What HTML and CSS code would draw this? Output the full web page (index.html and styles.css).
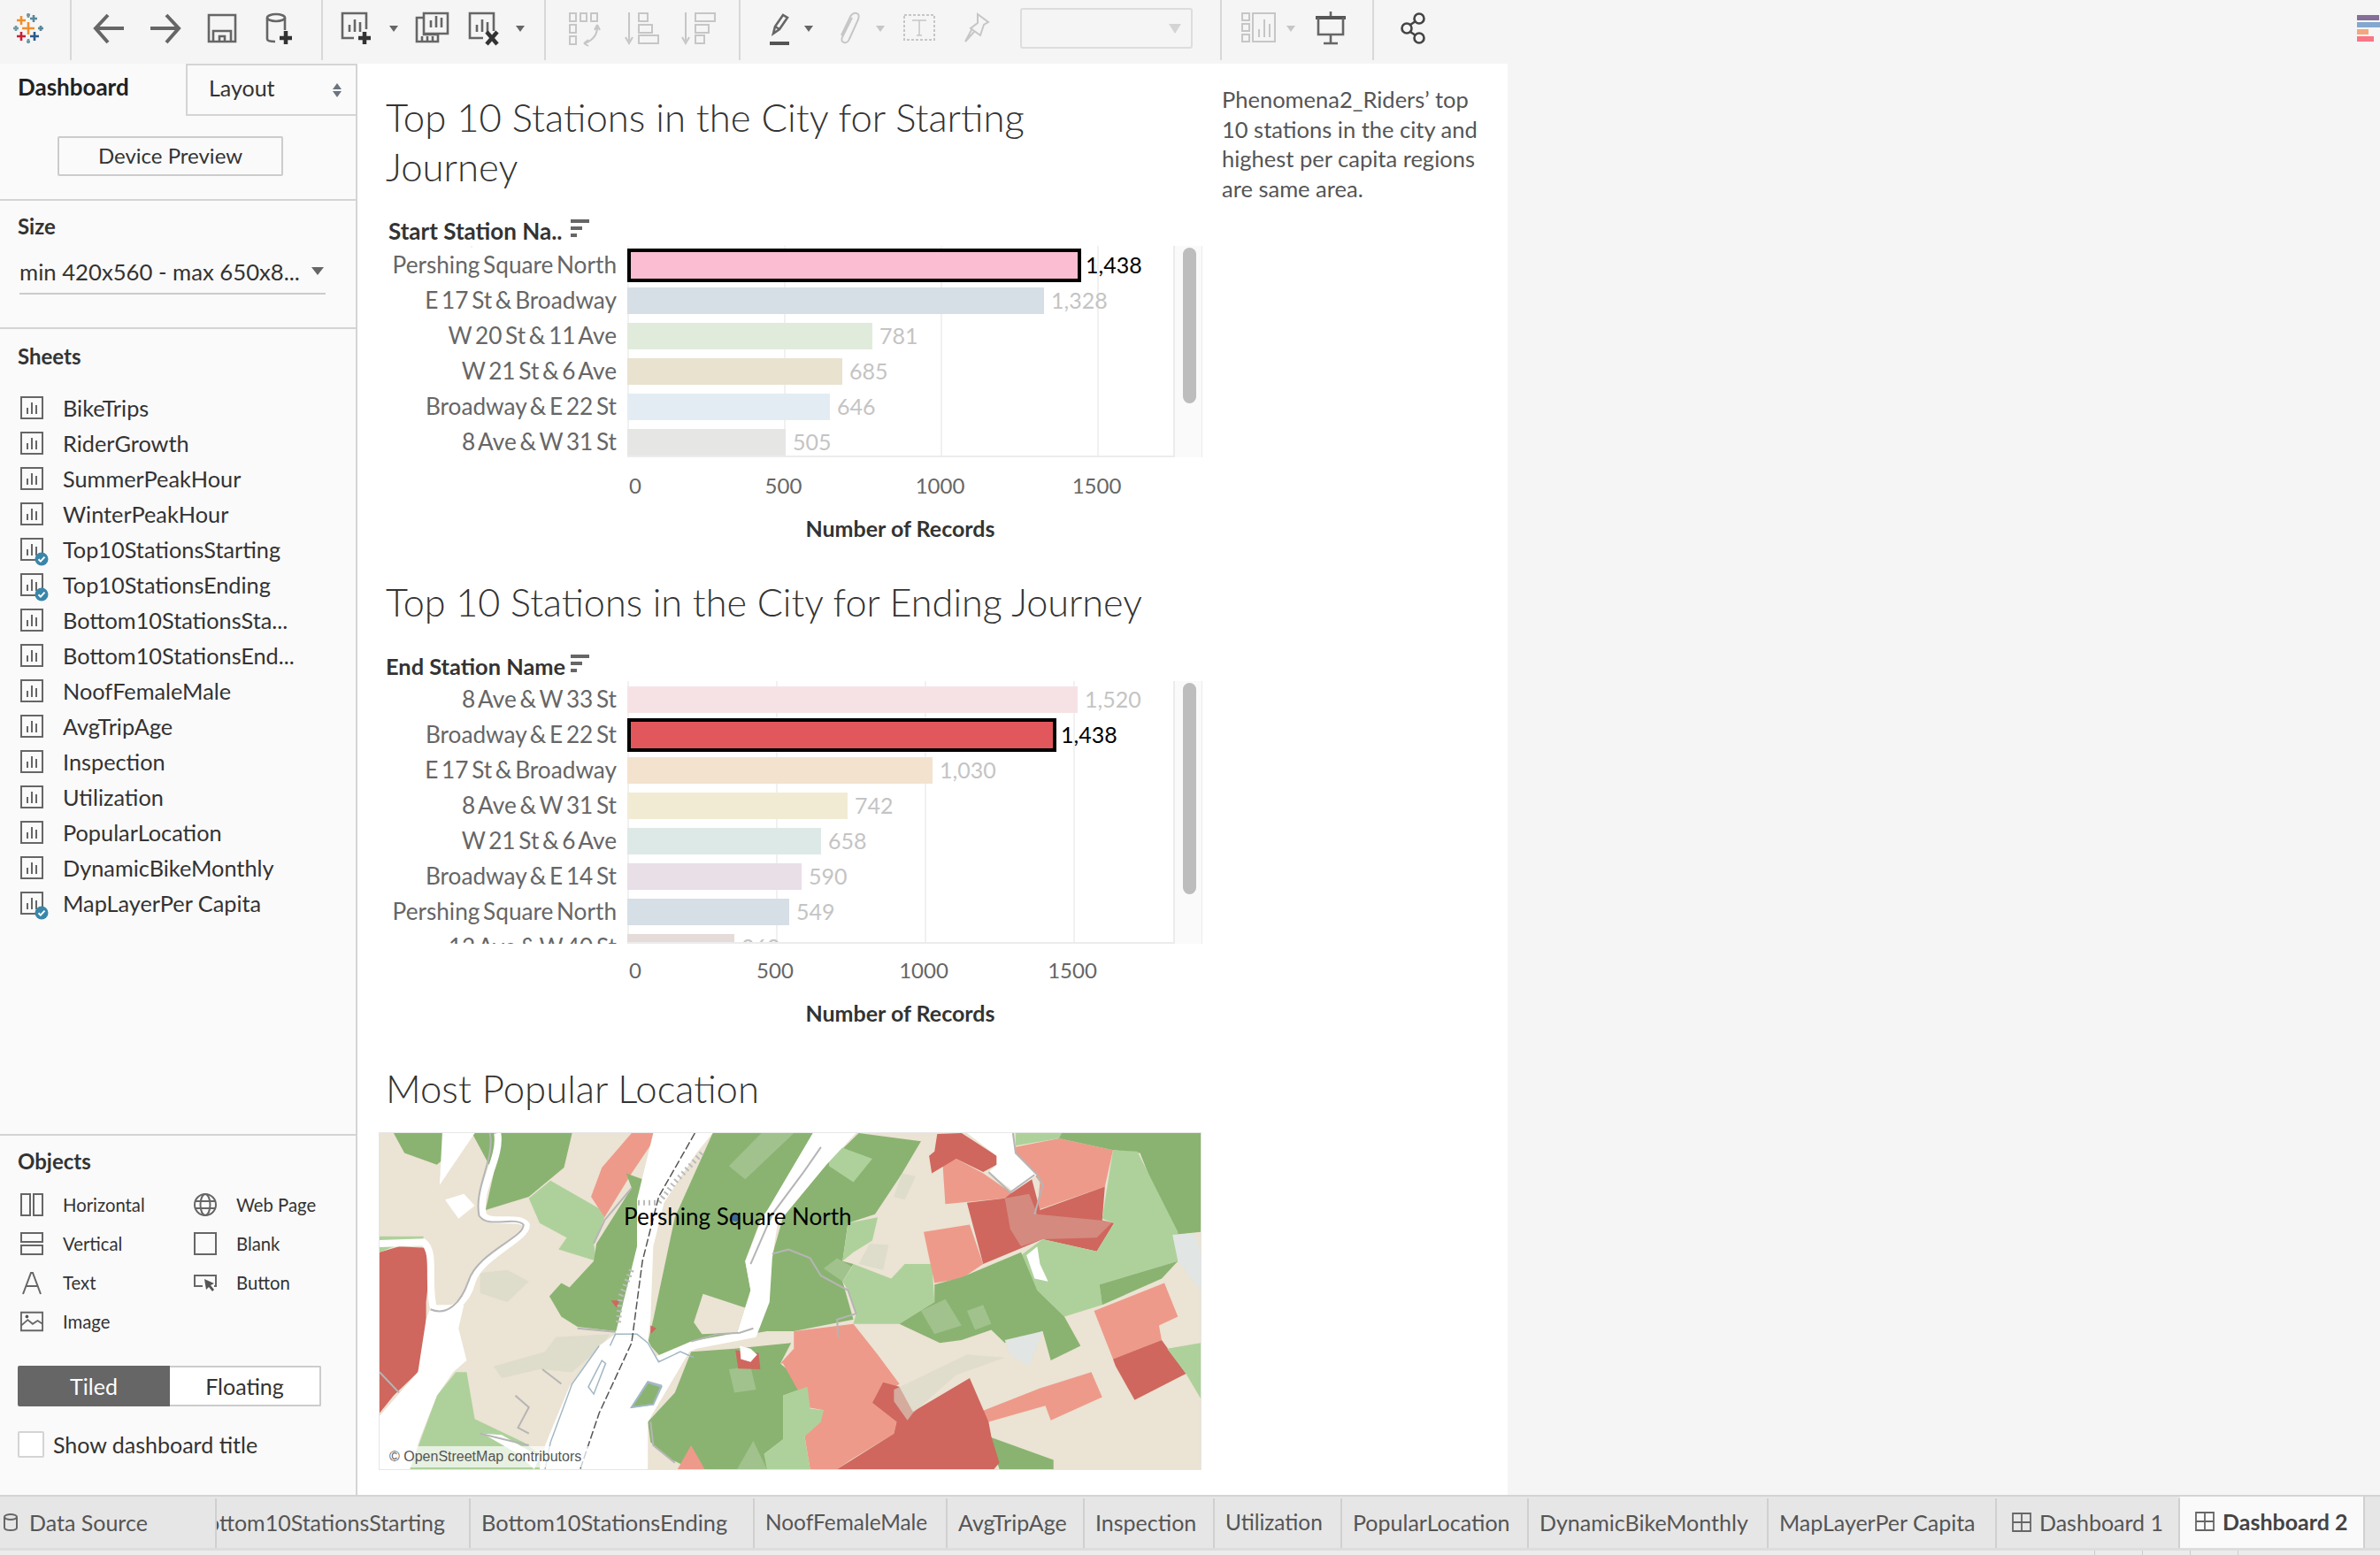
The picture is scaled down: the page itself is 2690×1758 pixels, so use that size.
FILE: index.html
```html
<!DOCTYPE html>
<html lang="en">
<head>
<meta charset="utf-8">
<title>Tableau Dashboard 2</title>
<link rel="stylesheet" href="styles.css">
</head>
<body>
<div class="app">
  <header class="toolbar">
    <div class="tgroup g0">
      <svg class="ic" viewBox="0 0 40 40"><g stroke-width="2.6" fill="none"><path class="lg-o" d="M12 6v10M7 11h10"/><path class="lg-t" d="M26 5v8M22 9h8"/><path class="lg-b" d="M6 17v6M3 20h6"/><path class="lg-o" d="M20 13v14M13 20h14"/><path class="lg-t" d="M34 17v6M31 20h6"/><path class="lg-r" d="M12 24v10M7 29h10"/><path class="lg-n" d="M27 24v10M22 29h10"/><path class="lg-b" d="M20 32v5M18 35h4M20 3v5M18 5h4"/></g></svg>
    </div>
    <div class="tgroup g1">
      <svg class="ic" viewBox="0 0 40 40"><path class="st th" d="M37 20H6M19 5L5 20l14 16"/></svg>
      <svg class="ic" viewBox="0 0 40 40"><path class="st th" d="M3 20h31M21 5l14 15-14 16"/></svg>
      <svg class="ic" viewBox="0 0 40 40"><path class="st" d="M5 5h30v30H5zM10 35V23h20v12M17 35v-6h6v6"/></svg>
      <svg class="ic" viewBox="0 0 40 40"><ellipse class="st" cx="17" cy="8" rx="10" ry="4"/><path class="st" d="M7 8v24q0 3 9 3M27 8v14"/><path class="st dk" d="M28 23v15M21 31h14"/></svg>
    </div>
    <div class="tgroup g2">
      <svg class="ic" viewBox="0 0 40 40"><path class="st" d="M16 31H3V3h27v18M11 24v-8M17 24V10M23 24v-11"/><path class="st dk" d="M28 24v14M21 31h14"/></svg>
      <span class="caret dark m16"></span>
      <svg class="ic m18" viewBox="0 0 40 40"><path class="st" d="M11 8H3v27h24v-8H11V8zM11 3h27v23H11zM19 19v-8M25 19V6M31 19v-11M9 34v-5M15 34v-5M21 34v-5"/></svg>
      <svg class="ic m20" viewBox="0 0 40 40"><path class="st" d="M18 31H3V3h27v20M11 24v-8M17 24V10M23 24v-11"/><path class="st dk" d="M22 24l12 14M34 24L22 38"/></svg>
      <span class="caret dark m15"></span>
    </div>
    <div class="tgroup g3">
      <svg class="ic" viewBox="0 0 40 40"><g class="off"><rect x="3" y="3" width="7" height="9"/><rect x="15" y="3" width="7" height="9"/><rect x="27" y="3" width="7" height="9"/><rect x="3" y="16" width="7" height="9"/><rect x="3" y="29" width="7" height="9"/><path d="M34 17q1 14-14 20M34 16l-3 6M34 16l3 6M19 37l5-4M19 37l5 3"/></g></svg>
      <svg class="ic" viewBox="0 0 40 40"><g class="off"><path d="M6 2v32M2 30l4 7 4-7"/><rect x="17" y="3" width="10" height="9"/><rect x="17" y="16" width="15" height="9"/><rect x="17" y="28" width="22" height="9"/></g></svg>
      <svg class="ic" viewBox="0 0 40 40"><g class="off"><path d="M6 2v32M2 30l4 7 4-7"/><rect x="17" y="3" width="22" height="9"/><rect x="17" y="16" width="15" height="9"/><rect x="17" y="28" width="10" height="9"/></g></svg>
    </div>
    <div class="tgroup g4">
      <svg class="ic" viewBox="0 0 40 40"><path class="st" d="M13 26l2-8 9-13 5 3-9 13-7 5zM15 18l5 3"/><path class="st thick" d="M9 37h22"/></svg>
      <span class="caret dark m8"></span>
      <svg class="ic m19" viewBox="0 0 40 40"><path class="offs" d="M25 8l-11 22q-2 5 2 6t6-4l10-22q2-6-2-7t-7 4l-10 21"/></svg>
      <span class="caret m12"></span>
      <svg class="ic m19" viewBox="0 0 40 40"><rect class="offd" x="3" y="5" width="34" height="28"/><path class="offs thin" d="M12 11h16M20 11v17M17 28h6"/></svg>
      <svg class="ic m25" viewBox="0 0 40 40"><path class="offs" d="M21 4l12 9-5 3-4 12-11-8 8-6zM15 20L7 35l10-11"/></svg>
      <div class="combo"><span class="caret big"></span></div>
    </div>
    <div class="tgroup g5">
      <svg class="ic" viewBox="0 0 40 40"><g class="off"><rect x="1" y="3" width="8" height="8"/><rect x="1" y="15" width="8" height="8"/><rect x="1" y="27" width="8" height="8"/><rect x="13" y="3" width="25" height="32"/><path d="M20 30V21M26 30V10M32 30V15"/></g></svg>
      <span class="caret m11"></span>
      <svg class="ic m20" viewBox="0 0 40 40"><path class="st thick" d="M3 8h34"/><path class="st" d="M20 1v5M6 8v19h28V8M20 27v10M12 37h16"/></svg>
    </div>
    <div class="tgroup g6">
      <svg class="ic" viewBox="0 0 40 40"><g class="share"><circle cx="26" cy="9" r="5.5"/><circle cx="12" cy="20" r="5.5"/><circle cx="26" cy="31" r="5.5"/><path d="M16 16l6-4M16 24l6 4"/></g></svg>
    </div>
    <div class="badge-stack"><i class="b1"></i><i class="b2"></i><i class="b3"></i><i class="b4"></i></div>
  </header>

  <div class="main">
    <aside class="sidebar">
      <div class="side-tabs">
        <div class="side-tab active">Dashboard</div>
        <div class="side-tab">Layout<span class="updown"><i></i><i></i></span></div>
      </div>
      <div class="device"><button class="btn">Device Preview</button></div>
      <section class="size">
        <h3 class="sec-title">Size</h3>
        <div class="select"><span>min 420x560 - max 650x8...</span><span class="caret dark wide"></span></div>
      </section>
      <section class="sheets">
        <h3 class="sec-title">Sheets</h3>
        <ul class="sheet-list">
          <li class="sheet"><svg class="sheet-ic" viewBox="0 0 26 26"><use href="#s"/></svg>BikeTrips</li>
          <li class="sheet"><svg class="sheet-ic" viewBox="0 0 26 26"><use href="#s"/></svg>RiderGrowth</li>
          <li class="sheet"><svg class="sheet-ic" viewBox="0 0 26 26"><use href="#s"/></svg>SummerPeakHour</li>
          <li class="sheet"><svg class="sheet-ic" viewBox="0 0 26 26"><use href="#s"/></svg>WinterPeakHour</li>
          <li class="sheet"><svg class="sheet-ic" viewBox="0 0 26 26"><use href="#s"/></svg><svg class="check" viewBox="0 0 16 16"><use href="#c"/></svg>Top10StationsStarting</li>
          <li class="sheet"><svg class="sheet-ic" viewBox="0 0 26 26"><use href="#s"/></svg><svg class="check" viewBox="0 0 16 16"><use href="#c"/></svg>Top10StationsEnding</li>
          <li class="sheet"><svg class="sheet-ic" viewBox="0 0 26 26"><use href="#s"/></svg>Bottom10StationsSta...</li>
          <li class="sheet"><svg class="sheet-ic" viewBox="0 0 26 26"><use href="#s"/></svg>Bottom10StationsEnd...</li>
          <li class="sheet"><svg class="sheet-ic" viewBox="0 0 26 26"><use href="#s"/></svg>NoofFemaleMale</li>
          <li class="sheet"><svg class="sheet-ic" viewBox="0 0 26 26"><use href="#s"/></svg>AvgTripAge</li>
          <li class="sheet"><svg class="sheet-ic" viewBox="0 0 26 26"><use href="#s"/></svg>Inspection</li>
          <li class="sheet"><svg class="sheet-ic" viewBox="0 0 26 26"><use href="#s"/></svg>Utilization</li>
          <li class="sheet"><svg class="sheet-ic" viewBox="0 0 26 26"><use href="#s"/></svg>PopularLocation</li>
          <li class="sheet"><svg class="sheet-ic" viewBox="0 0 26 26"><use href="#s"/></svg>DynamicBikeMonthly</li>
          <li class="sheet"><svg class="sheet-ic" viewBox="0 0 26 26"><use href="#s"/></svg><svg class="check" viewBox="0 0 16 16"><use href="#c"/></svg>MapLayerPer Capita</li>
        </ul>
      </section>
      <section class="objects">
        <h3 class="sec-title">Objects</h3>
        <div class="obj-grid">
          <div class="obj"><svg class="obj-ic" viewBox="0 0 26 26"><path d="M1 1h10v24H1zM15 1h10v24H15z"/></svg>Horizontal</div>
          <div class="obj"><svg class="obj-ic" viewBox="0 0 26 26"><circle cx="13" cy="13" r="12"/><ellipse cx="13" cy="13" rx="5.5" ry="12"/><path d="M1 9h24M1 17h24"/></svg>Web Page</div>
          <div class="obj"><svg class="obj-ic" viewBox="0 0 26 26"><path d="M1 1h24v10H1zM1 15h24v10H1z"/></svg>Vertical</div>
          <div class="obj"><svg class="obj-ic" viewBox="0 0 26 26"><path d="M1 1h24v24H1z"/></svg>Blank</div>
          <div class="obj"><svg class="obj-ic" viewBox="0 0 26 26"><path d="M3 26L12 2h2l9 24M7 17h12"/></svg>Text</div>
          <div class="obj"><svg class="obj-ic" viewBox="0 0 26 26"><path d="M10 17H1V5h24v12h-2"/><path class="solid" d="M12 9l2 12 3-3 4 5 2-2-4-5 4-2z"/></svg>Button</div>
          <div class="obj"><svg class="obj-ic" viewBox="0 0 28 26"><path d="M1 2h26v22H1zM1 18l8-7 6 5 6-4 6 4"/><circle class="solid" cx="8" cy="7" r="2"/></svg>Image</div>
        </div>
        <div class="toggle"><div class="seg on">Tiled</div><div class="seg">Floating</div></div>
        <label class="show-title"><span class="box"></span>Show dashboard title</label>
      </section>
    </aside>

    <main class="canvas">
      <div class="dash">
        <h2 class="title first">Top 10 Stations in the City for Starting Journey</h2>
        <div class="chart c-start">
          <div class="chart-head start">Start Station Na.. <svg class="sort" viewBox="0 0 21 20"><path d="M0 0h21v4H0zM0 8h13v4H0zM0 16h7v4H0z"/></svg></div>
          <div class="rows">
            <div class="row"><div class="lab">Pershing Square North</div><div class="bar hl pink bw1"></div><div class="val strong">1,438</div></div>
            <div class="row"><div class="lab">E 17 St &amp; Broadway</div><div class="bar" style="width:471px;background:#d6dee6"></div><div class="val">1,328</div></div>
            <div class="row"><div class="lab">W 20 St &amp; 11 Ave</div><div class="bar" style="width:277px;background:#e0ebdc"></div><div class="val">781</div></div>
            <div class="row"><div class="lab">W 21 St &amp; 6 Ave</div><div class="bar" style="width:243px;background:#e8e2cf"></div><div class="val">685</div></div>
            <div class="row"><div class="lab">Broadway &amp; E 22 St</div><div class="bar" style="width:229px;background:#e4ecf3"></div><div class="val">646</div></div>
            <div class="row"><div class="lab">8 Ave &amp; W 31 St</div><div class="bar" style="width:179px;background:#e6e6e4"></div><div class="val">505</div></div>
          </div>
          <div class="scroll"><div class="thumb"></div></div>
          <div class="ticks"><span>0</span><span>500</span><span>1000</span><span>1500</span></div>
          <div class="axis-title">Number of Records</div>
        </div>

        <h2 class="title second">Top 10 Stations in the City for Ending Journey</h2>
        <div class="chart c-end">
          <div class="chart-head">End Station Name <svg class="sort" viewBox="0 0 21 20"><path d="M0 0h21v4H0zM0 8h13v4H0zM0 16h7v4H0z"/></svg></div>
          <div class="rows">
            <div class="row"><div class="lab">8 Ave &amp; W 33 St</div><div class="bar" style="width:509px;background:#f6e2e5"></div><div class="val">1,520</div></div>
            <div class="row"><div class="lab">Broadway &amp; E 22 St</div><div class="bar hl red bw2"></div><div class="val strong">1,438</div></div>
            <div class="row"><div class="lab">E 17 St &amp; Broadway</div><div class="bar" style="width:345px;background:#f3e2ce"></div><div class="val">1,030</div></div>
            <div class="row"><div class="lab">8 Ave &amp; W 31 St</div><div class="bar" style="width:249px;background:#f2ebd4"></div><div class="val">742</div></div>
            <div class="row"><div class="lab">W 21 St &amp; 6 Ave</div><div class="bar" style="width:219px;background:#dde9e7"></div><div class="val">658</div></div>
            <div class="row"><div class="lab">Broadway &amp; E 14 St</div><div class="bar" style="width:197px;background:#e8dfe7"></div><div class="val">590</div></div>
            <div class="row"><div class="lab">Pershing Square North</div><div class="bar" style="width:183px;background:#d6dee6"></div><div class="val">549</div></div>
            <div class="row"><div class="lab">12 Ave &amp; W 40 St</div><div class="bar" style="width:121px;background:#e5dbd9"></div><div class="val">362</div></div>
          </div>
          <div class="scroll"><div class="thumb"></div></div>
          <div class="ticks"><span>0</span><span>500</span><span>1000</span><span>1500</span></div>
          <div class="axis-title">Number of Records</div>
        </div>

        <h2 class="title third">Most Popular Location</h2>
        <div class="map">
          <svg class="map-svg" viewBox="14 62 1518 1150" preserveAspectRatio="none">
            <rect class="be" x="14" y="62" width="1518" height="1150"/>
            <polygon class="patch" points="200,540 250,530 290,570 250,640 200,610"/>
            <polygon class="patch" points="340,760 440,750 420,800 370,880 310,870 240,900 225,860 320,810"/>
            <polygon class="patch" points="920,440 955,445 945,530 900,510"/>
            <polygon class="patch" points="980,200 1005,210 985,290 965,280"/>
            <polygon class="g" points="40,62 190,62 120,170 60,130"/>
            <polygon class="g" points="185,62 370,62 355,180 290,280 210,325 225,200"/>
            <polygon class="lg" points="330,225 420,320 430,350 410,440 415,500 345,460 360,420 310,370 290,285"/>
            <polygon class="s" points="480,62 530,62 480,200 430,350 405,280 425,180"/>
            <polygon class="g" points="470,200 530,240 500,700 450,740 380,725 350,690 328,620 350,575 365,590 410,500 415,440 480,250"/>
            <polygon class="g" points="630,62 815,62 830,110 720,350 690,500 700,600 680,750 590,790 540,840 510,780 520,700 560,350"/>
            <polygon class="pale" points="720,62 780,62 690,220 660,175"/>
            <polygon class="be" points="612,612 690,660 675,745 610,750 595,710"/>
            <polygon class="g" points="840,170 900,62 1015,90 980,200 930,340 880,370 870,500 890,510 870,570 890,700 780,740 730,740 700,750 740,480 760,350"/>
            <polygon class="lg" points="845,95 925,150 890,230 845,175"/>
            <polygon class="lg" points="880,370 935,350 925,430 890,470 870,500"/>
            <polygon class="lg" points="890,510 960,560 985,510 1035,510 1040,640 975,715 890,715 895,680 880,600 870,570"/>
            <polygon class="pale" points="860,490 888,520 870,570 835,525"/>
            <polygon class="s" points="1055,165 1080,150 1130,200 1185,270 1170,285 1060,305"/>
            <polygon class="r" points="1030,140 1040,125 1045,65 1090,62 1155,140 1155,170 1130,195 1080,150 1035,200"/>
            <polygon class="s" points="1190,110 1270,80 1370,120 1355,245 1230,325 1235,230 1225,205 1190,130"/>
            <polygon class="lg" points="1190,62 1275,62 1270,80 1190,105"/>
            <polygon class="r" points="1100,300 1170,285 1180,270 1220,220 1235,325 1355,245 1350,360 1372,370 1340,467 1240,425 1130,510"/>
            <polygon class="urb" points="1170,285 1215,270 1230,340 1370,365 1340,420 1240,425 1200,450 1180,390"/>
            <polygon class="s" points="1020,400 1105,375 1130,510 1090,560 1040,575"/>
            <polygon class="g" points="1275,62 1532,62 1532,400 1480,410 1420,130 1370,120 1270,80"/>
            <polygon class="lg" points="1370,120 1415,125 1490,400 1490,500 1345,580 1350,650 1280,690 1230,600 1200,480 1240,425 1340,467 1372,370 1350,355"/>
            <polygon class="g" points="1040,580 1090,555 1200,470 1230,600 1280,690 1310,790 1255,840 1240,740 1170,780 1145,735 1090,770 1050,780 975,715 1040,640"/>
            <polygon class="pale" points="1015,670 1060,630 1090,720 1040,750"/>
            <polygon class="pale" points="1100,670 1130,650 1145,715 1115,735"/>
            <polygon class="g" points="1345,580 1490,500 1460,560 1350,650"/>
            <polygon class="gy" points="1480,410 1520,405 1532,470 1532,600 1490,500"/>
            <polygon class="gy" points="1170,770 1240,740 1215,860 1180,820"/>
            <polygon class="s" points="1335,670 1465,575 1490,690 1455,720 1460,770 1370,835"/>
            <polygon class="r" points="1370,835 1460,770 1505,885 1410,975 1375,860"/>
            <polygon class="lg" points="1470,800 1532,780 1532,970 1505,885"/>
            <polygon class="s" points="1125,1015 1235,935 1330,880 1350,965 1255,1045 1245,995 1140,1050"/>
            <polygon class="g" points="1140,1100 1260,1180 1260,1212 1160,1212"/>
            <polygon class="g" points="590,810 670,800 775,780 755,850 805,930 760,960 760,1110 725,1160 735,1212 590,1212 555,1180 515,1120 510,1050 560,950"/>
            <polygon class="s" points="590,1130 615,1212 565,1212"/>
            <polygon class="pale" points="660,870 700,860 710,940 670,950"/>
            <polygon class="pale" points="705,1115 730,1212 675,1212"/>
            <polygon class="s" points="780,740 890,715 935,820 975,920 925,985 970,1050 965,1090 885,1180 860,1212 810,1212 800,1100 835,1010 805,1000 760,850 755,850 780,800"/>
            <polygon class="r" points="945,915 975,930 1000,1015 1105,900 1140,1050 1145,1100 1160,1190 1150,1212 860,1212 965,1090 970,1050 925,985"/>
            <polygon class="lg" points="760,960 805,930 810,1005 835,1010 830,1050 800,1100 810,1212 730,1212 725,1160 760,1110"/>
            <polygon class="urb2" points="965,940 1100,820 1170,830 1080,890 1000,1020 990,1045 965,980"/>
            <polygon class="r" points="14,470 50,450 100,455 110,480 100,640 100,800 85,880 40,960 14,1020"/>
            <polygon class="lg" points="14,415 95,415 95,430 40,450 14,470"/>
            <polygon class="lg" points="155,880 175,880 190,1040 280,1120 310,1160 310,1212 70,1212 120,960"/>
            <polygon class="w" points="130,62 190,62 125,240"/>
            <polygon class="w" points="135,290 170,270 190,310 160,355"/>
            <polygon class="w" points="110,650 170,650 160,730 175,840 150,880 120,960 90,1100 70,1212 14,1212 14,1030 85,880 100,700"/>
            <polygon class="w" points="205,1090 240,1095 310,1170 300,1212 270,1160"/>
            <polygon class="w" points="420,790 450,750 510,770 530,845 590,800 510,1050 510,1212 310,1212 320,1130 340,1040 365,930"/>
            <path class="river" d="M232 62C240 150 195 250 205 340C215 380 270 340 285 375C290 420 200 480 185 570C175 650 140 680 115 670C100 580 120 470 95 435L14 440"/>
            <path class="river-edge" d="M218 62C228 150 188 250 198 345C215 390 262 345 280 375C282 420 195 470 178 570C165 640 140 690 108 665"/>
            <polygon class="w" points="520,62 630,62 600,130 540,300 520,450 515,700 510,770 450,750 490,450 490,290"/>
            <polygon class="w" points="815,62 895,62 840,170 750,370 740,490 735,640 710,760 600,800 540,845 520,830 590,775 675,745 700,600 690,500 720,360"/>
            <polygon class="w" points="1140,195 1185,260 1230,205 1190,130 1185,62 1100,62 1155,140 1155,170"/>
            <polygon class="w" points="1210,480 1230,450 1235,510 1250,570 1225,560"/>
            <polygon class="g island" points="480,1000 510,915 535,930 520,990"/>
            <polygon class="r" points="672,805 715,815 718,870 677,868"/>
            <polygon class="w" points="680,790 700,800 712,820 700,845 682,835"/>
            <polygon class="r" points="442,635 458,635 452,660"/>
            <polygon class="r" points="515,720 526,730 515,750"/>
            <path class="piers" d="M610 130L560 230 530 300 485 300M480 530L460 620 455 720"/>
            <path class="shore" d="M480 250L430 360 410 440"/>
            <path class="shore" d="M380 730L450 742M590 775L640 750 680 745 705 730M830 110L800 190 740 340 700 510"/>
            <path class="shore" d="M1185 62L1190 130 1230 205 1240 240 1225 340M1140 195L1180 265 1225 205"/>
            <path class="shore" d="M740 475L770 460 810 490 830 550 880 600 895 680 860 700 862 760"/>
            <path class="shore" d="M265 960L290 1000 270 1070 290 1090M315 870L350 920M200 1090L290 1130"/>
            <path class="shore" d="M515 1050L520 1130 560 1190M14 880L50 950"/>
            <path class="blue" d="M440 790L450 750 490 750 510 780 530 845 570 810 595 830M420 790L370 920 330 1120 320 1212M400 930L425 840 432 850 410 955z"/>
            <path class="blue" d="M480 1000L510 912 535 925 520 990z"/>
            <path class="tunnel" d="M597 62L530 280 500 500 480 780 420 1020 385 1212"/>
            <ellipse class="dot" cx="672" cy="350" rx="8" ry="15"/>
          </svg>
          <div class="map-label">Pershing Square North</div>
          <div class="osm">© OpenStreetMap contributors</div>
        </div>
      </div>
      <aside class="note">Phenomena2_Riders’ top 10 stations in the city and highest per capita regions are same area.</aside>
    </main>
    <div class="blank"></div>
  </div>

  <nav class="tabbar">
    <div class="tab t1"><svg class="tab-db" viewBox="0 0 16 20"><ellipse cx="8" cy="4" rx="7" ry="3"/><path d="M1 4v12q0 3 7 3t7-3V4"/></svg>Data Source</div>
    <div class="tab t2 clipped">Bottom10StationsStarting</div>
    <div class="tab t3">Bottom10StationsEnding</div>
    <div class="tab t4">NoofFemaleMale</div>
    <div class="tab t5">AvgTripAge</div>
    <div class="tab t6">Inspection</div>
    <div class="tab t7">Utilization</div>
    <div class="tab t8">PopularLocation</div>
    <div class="tab t9">DynamicBikeMonthly</div>
    <div class="tab t10">MapLayerPer Capita</div>
    <div class="tab t11"><svg class="tab-dash" viewBox="0 0 22 22"><path d="M1 1h20v20H1zM11 1v20M1 11h20"/></svg>Dashboard 1</div>
    <div class="tab t12 current"><svg class="tab-dash" viewBox="0 0 22 22"><path d="M1 1h20v20H1zM11 1v20M1 11h20"/></svg>Dashboard 2</div>
  </nav>
  <div class="status"><i></i><i></i><i></i><i></i></div>
</div>
<svg class="defs" width="0" height="0">
  <defs>
    <g id="s"><rect x="1" y="1" width="24" height="24" fill="none" stroke="#666" stroke-width="2"/><path d="M8 20v-7M13 20V7M18 20v-10" fill="none" stroke="#666" stroke-width="2"/></g>
    <g id="c"><circle cx="8" cy="8" r="7.5" fill="#3a86aa"/><path d="M4.5 8.2l2.4 2.4 4.6-5" fill="none" stroke="#fff" stroke-width="2"/></g>
  </defs>
</svg>
</body>
</html>
```

FILE: styles.css
```css
* { box-sizing: border-box; }
html, body { margin: 0; padding: 0; }
body { width: 2690px; height: 1758px; overflow: hidden; font-family: "Lato", "Open Sans", sans-serif; color: #333; background: #f5f5f5; }
.app { display: flex; flex-direction: column; height: 1758px; }
.defs { position: absolute; }

/* toolbar */
.toolbar { display: flex; height: 72px; flex: none; background: #f5f5f5; position: relative; }
.tgroup { display: flex; align-items: center; height: 68px; border-right: 2px solid #d8d8d8; padding-bottom: 4px; }
.g0 { width: 81px; padding-left: 12px; }
.g1 { width: 284px; padding-left: 22px; gap: 24px; }
.g2 { width: 252px; padding-left: 19px; }
.g3 { width: 220px; padding-left: 24px; gap: 24px; }
.g4 { width: 544px; padding-left: 24px; }
.g5 { width: 172px; padding-left: 22px; }
.g6 { border-right: 0; padding-left: 25px; }
.ic { width: 40px; height: 40px; flex: none; overflow: visible; }
.st { fill: none; stroke: #666; stroke-width: 2.6; }
.th { stroke-width: 4; }
.thick { stroke-width: 4; stroke: #555; }
.dk { stroke: #333; stroke-width: 4.5; }
.off rect, .off path { fill: none; stroke: #c6c6c6; stroke-width: 2; }
.offs { fill: none; stroke: #c6c6c6; stroke-width: 2; }
.offs.thin { stroke-width: 1.5; }
.offd { fill: none; stroke: #c6c6c6; stroke-width: 2; stroke-dasharray: 3 2; }
.share circle, .share path { fill: none; stroke: #444; stroke-width: 2.6; }
.lg-o { stroke: #f28e2b; }
.lg-t { stroke: #59879b; }
.lg-b { stroke: #7099a6; }
.lg-r { stroke: #c72037; }
.lg-n { stroke: #2a5a8a; }
.caret { display: inline-block; flex: none; width: 0; height: 0; border-left: 5px solid transparent; border-right: 5px solid transparent; border-top: 7px solid #c6c6c6; }
.caret.dark { border-top-color: #666; }
.caret.wide { border-left-width: 7px; border-right-width: 7px; border-top-width: 9px; }
.caret.big { border-left-width: 7px; border-right-width: 7px; border-top-width: 11px; border-top-color: #d4d4d4; }
.m8 { margin-left: 8px; } .m11 { margin-left: 11px; } .m12 { margin-left: 12px; } .m15 { margin-left: 15px; } .m16 { margin-left: 16px; } .m18 { margin-left: 18px; } .m19 { margin-left: 19px; } .m20 { margin-left: 20px; } .m25 { margin-left: 25px; }
.combo { width: 195px; height: 46px; margin-left: 29px; margin-top: 0; border: 2px solid #ddd; border-radius: 3px; display: flex; align-items: center; justify-content: flex-end; padding-right: 11px; }
.badge-stack { position: absolute; left: 2664px; top: 17px; display: flex; flex-direction: column; gap: 2px; width: 26px; }
.badge-stack i { display: block; height: 6px; }
.b1 { width: 25px; background: #836f97; }
.b2 { width: 26px; background: #83a8cf; }
.b3 { width: 13px; background: #f4a77c; }
.b4 { width: 19px; background: #fc7585; }

/* layout */
.main { display: flex; flex: 1; min-height: 0; }
.sidebar { width: 404px; flex: none; display: flex; flex-direction: column; background: #fafafa; border-right: 2px solid #d4d4d4; }
.canvas { width: 1300px; flex: none; background: #fff; display: flex; }
.blank { flex: 1; }

/* sidebar */
.side-tabs { display: flex; height: 59px; flex: none; }
.side-tab { font-size: 25px; line-height: 50px; }
.side-tab.active { width: 210px; padding-left: 20px; font-weight: 700; font-size: 26px; line-height: 52px; color: #222; }
.side-tab:not(.active) { flex: 1; padding-left: 24px; position: relative; border: solid #d4d4d4; border-width: 2px 0 2px 2px; color: #333; background: #fafafa; }
.updown { position: absolute; right: 16px; top: 20px; display: flex; flex-direction: column; gap: 2px; }
.updown i { display: block; width: 0; height: 0; border-left: 5px solid transparent; border-right: 5px solid transparent; }
.updown i:first-child { border-bottom: 7px solid #6b7480; }
.updown i:last-child { border-top: 7px solid #6b7480; }
.device { height: 96px; flex: none; padding: 23px 0 0 65px; border-bottom: 2px solid #d4d4d4; }
.btn { width: 255px; height: 45px; border: 2px solid #ccc; border-radius: 2px; background: #fafafa; font: 24px "Lato", sans-serif; color: #333; padding: 0 0 3px; }
.sec-title { margin: 0; font-size: 24px; font-weight: 700; color: #333; line-height: 30px; }
.size { height: 145px; flex: none; padding: 14px 0 0 20px; border-bottom: 2px solid #d4d4d4; }
.select { display: flex; align-items: center; justify-content: space-between; width: 346px; height: 42px; margin-top: 20px; margin-left: 2px; padding: 0 2px 9px 0; font-size: 25.7px; border-bottom: 2px solid #ccc; white-space: nowrap; }
.sheets { padding: 16px 0 0 20px; flex: none; }
.sheet-list { list-style: none; margin: 23px 0 0; padding: 0; }
.sheet { display: flex; align-items: center; height: 40px; font-size: 25.3px; position: relative; white-space: nowrap; }
.sheet-ic { width: 26px; height: 26px; margin: 0 22px 0 3px; flex: none; }
.check { position: absolute; left: 19px; top: 23px; width: 16px; height: 16px; }
.objects { margin-top: auto; height: 408px; flex: none; padding: 14px 0 0 20px; border-top: 2px solid #d4d4d4; }
.obj-grid { display: grid; grid-template-columns: 196px 1fr; grid-auto-rows: 44px; margin-top: 12px; }
.obj { display: flex; align-items: center; font-size: 20.3px; color: #333; }
.obj-ic { width: 26px; height: 26px; margin: 0 22px 0 3px; flex: none; overflow: visible; }
.obj-ic path, .obj-ic circle, .obj-ic ellipse { fill: none; stroke: #666; stroke-width: 2; }
.obj-ic .solid { fill: #555; stroke: none; }
.toggle { display: flex; width: 343px; height: 46px; margin-top: 28px; font-size: 25px; }
.seg { flex: 1; display: flex; align-items: center; justify-content: center; border: 2px solid #ccc; border-left: 0; background: #fff; border-radius: 0 2px 2px 0; }
.seg.on { width: 172px; flex: none; background: #666; border: 0; color: #fff; border-radius: 2px 0 0 2px; }
.show-title { display: flex; align-items: center; margin-top: 28px; height: 30px; font-size: 25px; }
.box { width: 30px; height: 30px; margin-right: 10px; background: #fff; border: 2px solid #d4d4d4; border-radius: 2px; }

/* canvas */
.dash { width: 966px; flex: none; padding-left: 24px; }
.note { width: 305px; margin: 24px 0 0 11px; font-size: 25.5px; line-height: 33.5px; color: #555; }
.title { margin: 0 0 0 8px; font-size: 43.7px; font-weight: 300; line-height: 56px; color: #333; }
.title.first { margin-top: 32px; width: 760px; }
.title.second { margin-top: 40px; white-space: nowrap; font-size: 43.2px; }
.title.third { margin-top: 42px; }
.chart { display: grid; grid-template-columns: 281px 617px 33px; --pitch: 177px; }
.c-start { margin-top: 31px; --first: 88px; }
.c-end { margin-top: 30px; --pitch: 168px; --first: 83px; }
.chart-head { grid-column: 1 / -1; height: 32px; padding: 0 0 3px 8px; font-size: 25.4px; font-weight: 700; color: #333; display: flex; align-items: center; white-space: pre; }
.chart-head.start { padding-left: 11px; height: 31px; font-size: 26px; }
.chart-head.start .sort { margin-left: 3px; }
.sort { width: 21px; height: 20px; margin-left: 0; margin-top: -6px; fill: #666; }
.rows { grid-column: 1 / 3; overflow: hidden; position: relative; background-image: repeating-linear-gradient(to right, #f1f1f1 281px, #f1f1f1 283px, transparent 283px, transparent calc(281px + var(--pitch))); }
.rows::after { content: ""; position: absolute; left: 281px; right: 0; bottom: 0; height: 2px; background: #ececec; }
.c-start .rows { height: 239px; padding-top: 2px; }
.c-end .rows { height: 297px; padding-top: 1px; }
.row { display: flex; align-items: center; height: 40px; }
.lab { width: 281px; height: 100%; flex: none; display: flex; align-items: center; justify-content: flex-end; padding: 0 12px 3px 0; font-size: 26.2px; word-spacing: -3px; color: #666; background: #fff; white-space: nowrap; }
.bar { height: 30px; flex: none; }
.hl { height: 38px; border: 4px solid #000; }
.bw1 { width: 513px; }
.bw2 { width: 485px; }
.pink { background: #fabdd2; }
.red { background: #e2575b; }
.val { margin-left: 8px; padding-bottom: 3px; font-size: 25px; color: #c4c4c4; }
.val.strong { margin-left: 5px; color: #000; }
.scroll { background: #fafafa; border-left: 2px solid #ececec; border-right: 1px solid #ececec; padding: 2px 0 0 9px; }
.thumb { width: 15px; border-radius: 8px; background: #bdbdbd; }
.c-start .thumb { height: 176px; }
.c-end .thumb { height: 239px; }
.ticks { grid-column: 2 / 4; display: flex; height: 34px; padding-bottom: 3px; align-items: center; font-size: 24px; color: #666; }
.c-start .ticks { margin-top: 16px; }
.c-end .ticks { margin-top: 14px; }
.ticks span { width: var(--pitch); text-align: center; flex: none; }
.ticks span:first-child { width: var(--first); text-align: left; padding-left: 2px; }
.axis-title { grid-column: 2; height: 30px; margin-top: 15px; text-align: center; font-size: 25px; line-height: 30px; font-weight: 700; color: #333; white-space: nowrap; }
.c-start + .title { margin-top: 40px; }

/* map */
.map { position: relative; width: 930px; height: 382px; margin-top: 22px; border: 1px solid #e6e6e6; }
.map-svg { display: block; width: 100%; height: 100%; }
.be { fill: #ebe3d3; }
.patch { fill: #dedccb; }
.g { fill: #8ab371; }
.lg { fill: #aed19b; }
.s { fill: #ee9a8a; }
.r { fill: #cf675e; }
.w { fill: #fff; }
.gy { fill: #e1e5e3; }
.pale { fill: #fff; opacity: .2; }
.urb { fill: #d9b5a8; opacity: .45; }
.urb2 { fill: #d8d8c8; opacity: .6; }
.river { fill: none; stroke: #fff; stroke-width: 8; vector-effect: non-scaling-stroke; }
.river-edge, .shore { fill: none; stroke: #b5b5b5; stroke-width: 2; vector-effect: non-scaling-stroke; }
.piers { fill: none; stroke: #bbb; stroke-width: 6; stroke-dasharray: 2 4; vector-effect: non-scaling-stroke; }
.blue { fill: none; stroke: #a2b7c4; stroke-width: 1.5; vector-effect: non-scaling-stroke; }
.island { stroke: #a2b7c4; stroke-width: 2; vector-effect: non-scaling-stroke; }
.tunnel { fill: none; stroke: #555; stroke-width: 1.5; stroke-dasharray: 9 3; vector-effect: non-scaling-stroke; }
.dot { fill: #3f6a94; }
.map-label { position: absolute; left: 276px; top: 78px; font-size: 26px; line-height: 32px; color: #000; white-space: nowrap; }
.osm { position: absolute; left: 2px; bottom: 2px; padding: 2px 10px 2px 9px; background: rgba(255,255,255,.7); font-family: "Liberation Sans", sans-serif; font-size: 16px; line-height: 20px; color: #555; white-space: nowrap; }

/* tab bar */
.tabbar { display: flex; height: 63px; flex: none; background: #e6e6e6; border-top: 2px solid #d4d4d4; border-bottom: 3px solid #ddd; font-size: 25px; color: #555; }
.tab { display: flex; align-items: center; height: 56px; margin-top: 2px; padding: 0 0 3px 12px; border-right: 2px solid #d0d0d0; white-space: nowrap; overflow: hidden; flex: none; }
.t1 { width: 245px; padding-left: 4px; }
.t2 { width: 287px; }
.t3 { width: 321px; font-size: 25.4px; }
.t4 { width: 218px; font-size: 24.4px; }
.t5 { width: 155px; }
.t6 { width: 147px; }
.t7 { width: 144px; font-size: 24.4px; }
.t8 { width: 211px; }
.t9 { width: 271px; }
.t10 { width: 258px; }
.t11 { width: 207px; padding-left: 17px; }
.t12 { width: 209px; padding-left: 17px; }
.clipped { justify-content: flex-end; padding: 0 27px 3px 0; }
.current { background: #fafafa; font-weight: 700; height: 58px; margin-top: 0; color: #444; }
.tab-db { width: 16px; height: 20px; margin-right: 13px; flex: none; }
.tab-db ellipse, .tab-db path { fill: none; stroke: #666; stroke-width: 2; }
.tab-dash { width: 22px; height: 22px; margin-right: 9px; flex: none; }
.tab-dash path { fill: none; stroke: #666; stroke-width: 1.8; }
.status { height: 5px; flex: none; background: #ececec; display: flex; padding-left: 2367px; }
.status i { width: 54px; border-left: 1px solid #ccc; height: 5px; }
```
